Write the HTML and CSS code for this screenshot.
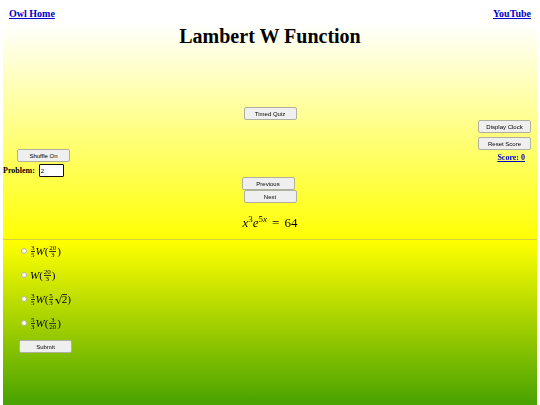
FILE: index.html
```html
<!DOCTYPE html>
<html lang="en">
<head>
    <meta charset="UTF-8">
    <meta name="viewport" content="width=device-width, initial-scale=1.0">
    <title>Lambert W Function</title>
    <link rel="stylesheet" href="styles.css">
</head>
<body>
    <nav class="links">
        <a href="#home">Owl Home</a>
        <a href="#youtube">YouTube</a>
    </nav>

    <h1>Lambert W Function</h1>

    <div class="controls">
        <div class="left">
            <button class="shuffle" id="shuffle">Shuffle On</button>
            <div class="problem">
                <label for="problem">Problem:</label>
                <input type="text" id="problem" value="2">
            </div>
        </div>
        <div class="center">
            <button id="timed">Timed Quiz</button>
            <div class="steps">
                <button class="previous" id="previous">Previous</button>
                <button id="next">Next</button>
            </div>
        </div>
        <div class="right">
            <button id="clock">Display Clock</button>
            <button id="reset">Reset Score</button>
            <a class="score" href="#score">Score: 0</a>
        </div>
    </div>

    <div class="equation math"><i>x</i><sup>3</sup><i>e</i><sup>5<i>x</i></sup><span class="rel">=</span>64</div>

    <hr>

    <form class="answers" onsubmit="return false">
        <div class="answer">
            <input type="radio" name="answer" id="a1">
            <label class="math" for="a1"><span class="frac"><span>3</span><span>5</span></span><i>W</i>(<span class="frac"><span>20</span><span>3</span></span>)</label>
        </div>
        <div class="answer">
            <input type="radio" name="answer" id="a2">
            <label class="math" for="a2"><i>W</i>(<span class="frac"><span>20</span><span>3</span></span>)</label>
        </div>
        <div class="answer">
            <input type="radio" name="answer" id="a3">
            <label class="math" for="a3"><span class="frac"><span>3</span><span>5</span></span><i>W</i>(<span class="frac"><span>5</span><span>3</span></span><svg class="radical" viewBox="0 0 8 10"><path d="M1 6 L2.5 5 L4.5 9.5 L8 0.5" fill="none" stroke="#000" stroke-width="0.6"/><path d="M2.5 5 L4.5 9.5" stroke="#000" stroke-width="1"/></svg><span class="root">2</span>)</label>
        </div>
        <div class="answer">
            <input type="radio" name="answer" id="a4">
            <label class="math" for="a4"><span class="frac"><span>5</span><span>3</span></span><i>W</i>(<span class="frac"><span>3</span><span>20</span></span>)</label>
        </div>
        <button class="submit">Submit</button>
    </form>

    <script>
        const problem = document.getElementById('problem');
        problem.focus();
        problem.setSelectionRange(1, 1);
    </script>
</body>
</html>
```
FILE: styles.css
```css
html {
    background: #fff;
}

body {
    box-sizing: border-box;
    min-height: 100vh;
    margin: 0 3px;
    font-family: "Liberation Serif", serif;
    font-size: 8px;
    background: linear-gradient(#fff 24px, #ff0 242px, #48a200 405px);
}

a {
    color: #0000c8;
    font-weight: bold;
}

.links {
    display: flex;
    justify-content: space-between;
    padding: 8px 6px 0;
    font-size: 10px;
    line-height: 12px;
}

h1 {
    margin: 4px 0 0;
    font-size: 20px;
    line-height: 24px;
    text-align: center;
}

button {
    box-sizing: border-box;
    width: 53px;
    height: 13px;
    padding: 0;
    border: 1px solid #b0b0a0;
    border-radius: 2px;
    background: #efefef;
    color: #000;
    font-family: "Liberation Sans", sans-serif;
    font-size: 6px;
    line-height: 10px;
}

.controls {
    display: grid;
    grid-template-columns: 1fr auto 1fr;
    margin-top: 59px;
}

.left {
    padding-top: 42px;
}

.shuffle {
    display: block;
    margin-left: 14px;
}

.problem {
    display: flex;
    align-items: center;
    gap: 4px;
    margin-top: 2px;
    font-weight: bold;
}

.problem input {
    box-sizing: border-box;
    width: 25px;
    height: 13px;
    padding: 0 1px;
    border: 1px solid #101010;
    border-radius: 1px;
    outline: none;
    font-family: "Liberation Sans", sans-serif;
    font-size: 6px;
}

.center {
    display: flex;
    flex-direction: column;
    align-items: center;
    gap: 57px;
}

.steps {
    display: flex;
    flex-direction: column;
}

.previous {
    margin-left: -2px;
}

.right {
    display: flex;
    flex-direction: column;
    align-items: flex-end;
    gap: 4px;
    padding: 13px 6px 0 0;
}

.score {
    margin-right: 6px;
    line-height: 8px;
}

.math {
    display: flex;
    align-items: center;
    font-size: 11px;
    line-height: 12px;
}

.equation {
    justify-content: center;
    margin-top: 12px;
    font-size: 13px;
    line-height: 16px;
}

.equation sup {
    padding-bottom: 8px;
    font-size: 9px;
    line-height: 8px;
}

.rel {
    margin: 0 5px;
}

hr {
    margin: 8px 0 4px;
    border: 0;
    border-top: 1px solid #d2d23c;
}

.answers {
    padding-left: 18px;
}

.answer {
    display: flex;
    align-items: center;
    gap: 3px;
    height: 14px;
    margin-bottom: 10px;
}

.answer input {
    appearance: none;
    width: 6px;
    height: 6px;
    margin: 0;
    border: 1px solid #b4b496;
    border-radius: 50%;
    background: #fff;
}

.answer input:checked {
    background: #0075ff;
}

.frac {
    display: flex;
    flex-direction: column;
    margin: 0 1px;
    font-size: 7px;
    line-height: 6px;
    text-align: center;
}

.frac span + span {
    border-top: 1px solid #333;
}

.radical {
    width: 8px;
    height: 10px;
}

.root {
    border-top: 1px solid #333;
    line-height: 9px;
}

.submit {
    display: block;
    margin-left: -2px;
}
```
